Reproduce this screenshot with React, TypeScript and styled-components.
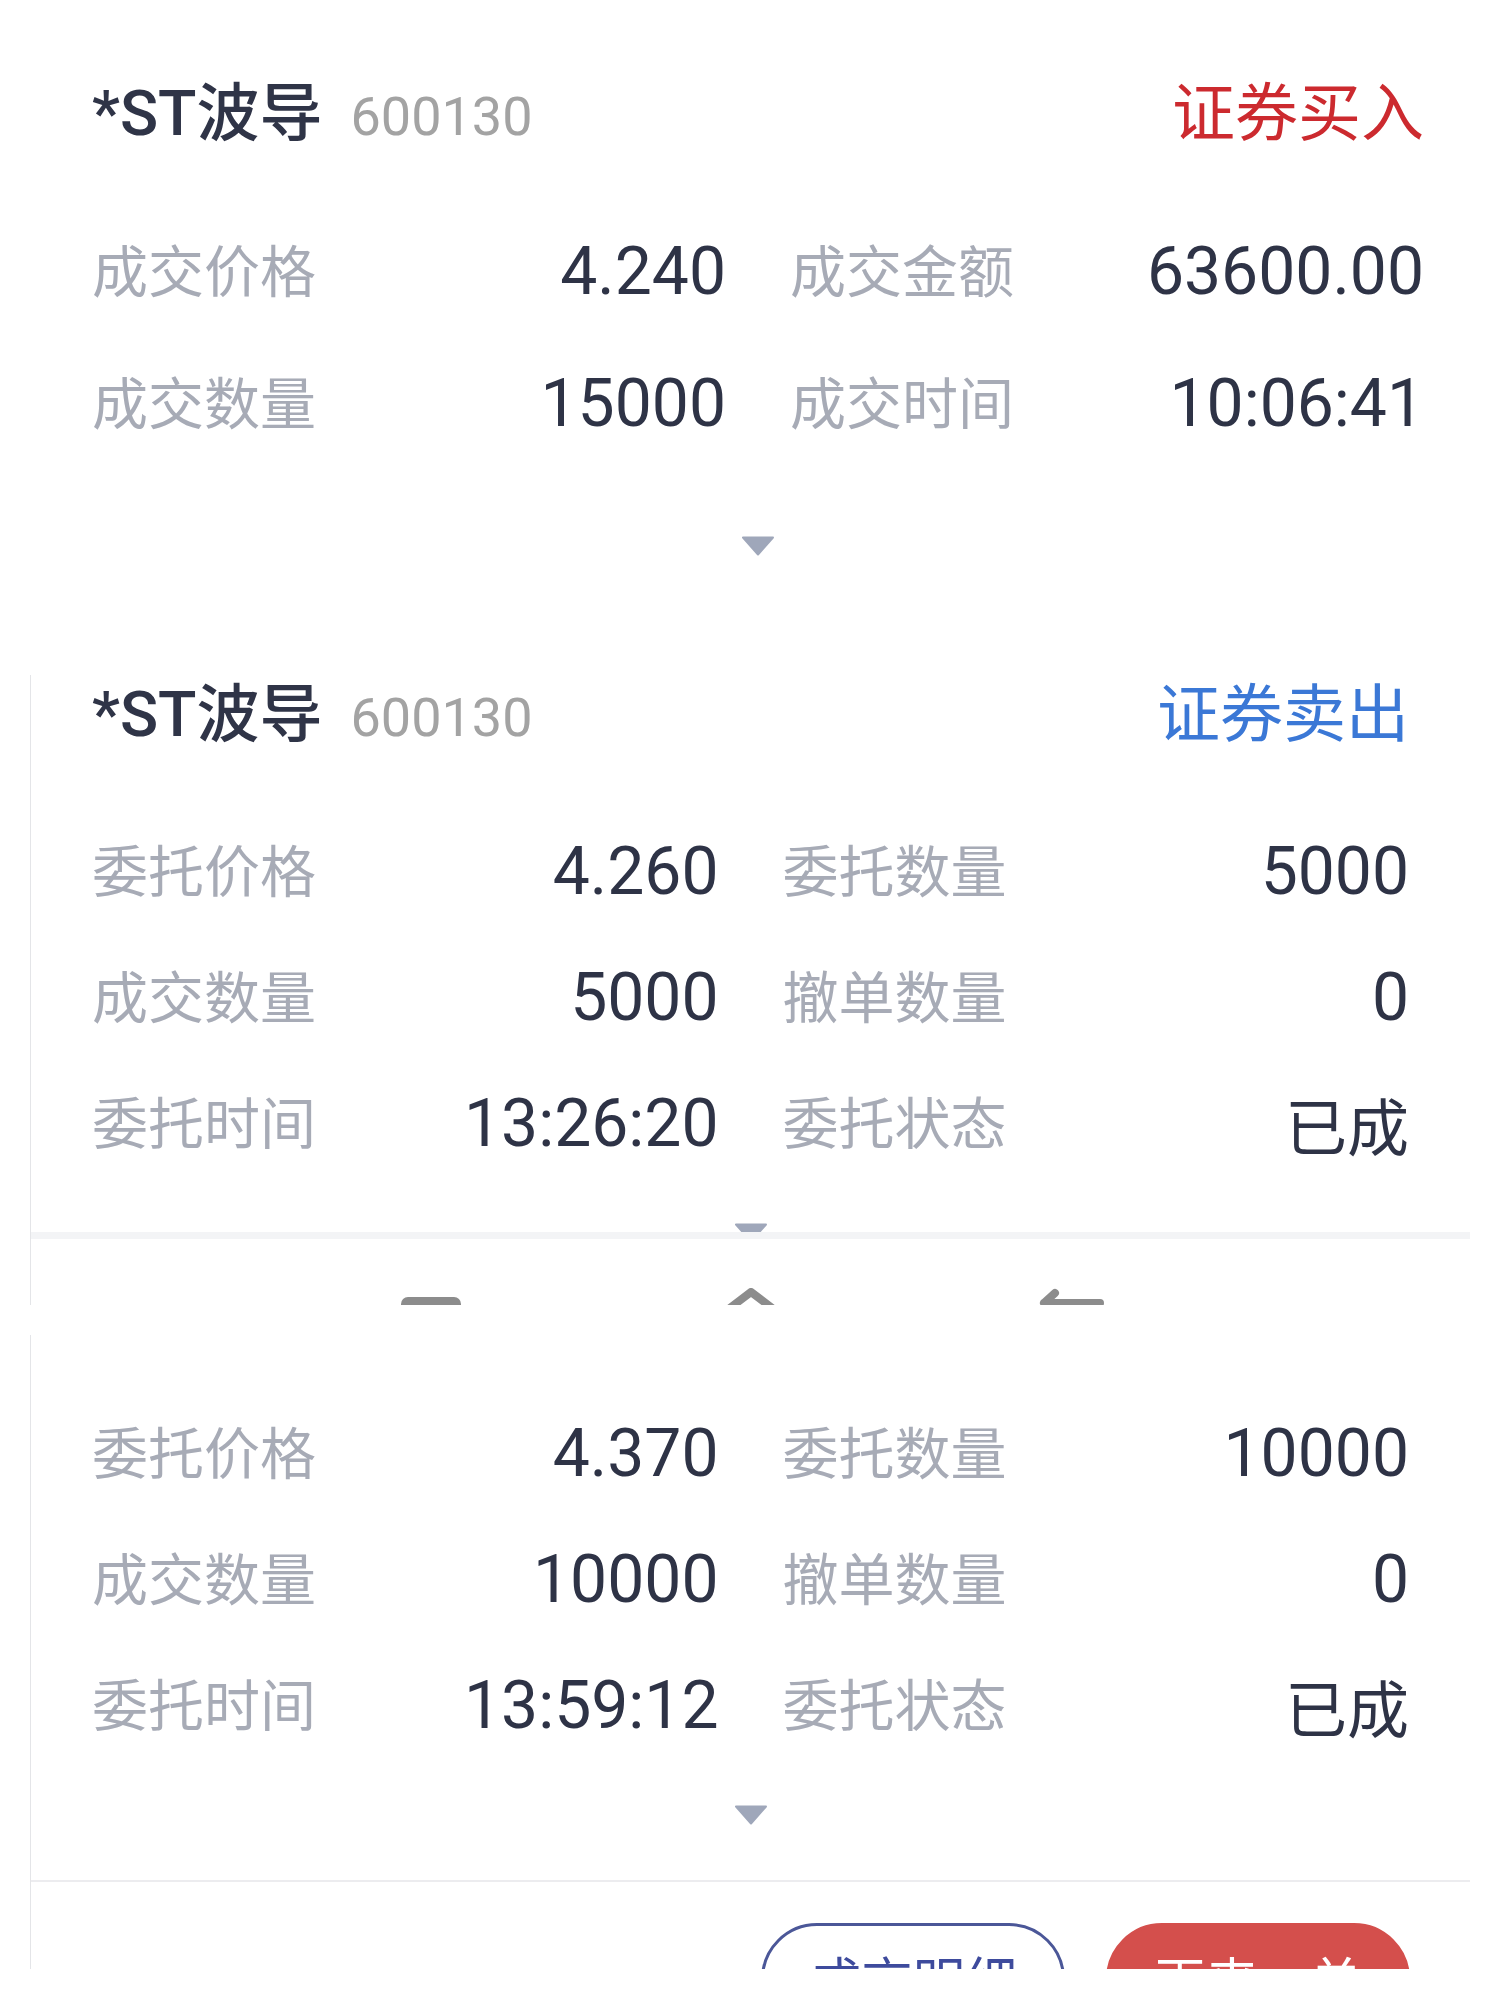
import React from "react";
import styled, { createGlobalStyle } from "styled-components";

const GlobalStyle = createGlobalStyle`
  html, body {
    margin: 0;
    padding: 0;
    background: #ffffff;
  }
  body {
    font-family: Roboto, "Noto Sans CJK SC", sans-serif;
  }
  * { box-sizing: border-box; }
`;

const Page = styled.div`
  width: 1500px;
  min-height: 2000px;
  background: #ffffff;
`;

const Card = styled.section<{ $framed?: boolean; $clip?: number; $gap?: number }>`
  margin: ${p => (p.$framed ? `0 30px ${p.$gap ?? 0}px 30px` : `0 0 ${p.$gap ?? 0}px 0`)};
  border-left: ${p => (p.$framed ? "1px solid #e4e5e8" : "none")};
  ${p => (p.$clip ? `height: ${p.$clip}px; overflow: hidden;` : "")}
`;

const Body = styled.div<{ $top: number; $right: number; $bottom?: number; $left: number }>`
  padding: ${p => `${p.$top}px ${p.$right}px ${p.$bottom ?? 0}px ${p.$left}px`};
`;

const Header = styled.header`
  display: flex;
  align-items: baseline;
  height: 66px;
  line-height: 66px;
`;

const StockName = styled.span`
  font-family: Roboto, "Noto Sans CJK SC", sans-serif;
  font-size: 63px;
  font-weight: 500;
  color: #2f3447;
`;

const StockCode = styled.span`
  font-family: Roboto, sans-serif;
  font-size: 54px;
  color: #a3a3a3;
  margin-left: 28px;
`;

const TradeType = styled.span<{ $color: string }>`
  margin-left: auto;
  font-family: "Noto Sans CJK SC", sans-serif;
  font-size: 63px;
  color: ${p => p.$color};
`;

const Grid = styled.div<{ $row: number; $top: number }>`
  display: grid;
  grid-template-columns: 1fr 1fr;
  column-gap: 64px;
  grid-auto-rows: ${p => p.$row}px;
  margin-top: ${p => p.$top}px;
`;

const Cell = styled.div`
  display: flex;
  justify-content: space-between;
  align-items: center;
`;

const Label = styled.span`
  font-family: "Noto Sans CJK SC", sans-serif;
  font-size: 56px;
  line-height: 1;
  padding-bottom: 4px;
  color: #a7abb6;
`;

const Value = styled.span<{ $cjk?: boolean }>`
  font-family: ${p => (p.$cjk ? `"Noto Sans CJK SC", sans-serif` : `Roboto, "Noto Sans CJK SC", sans-serif`)};
  font-size: ${p => (p.$cjk ? 62 : 66)}px;
  line-height: 1;
  padding-top: 4px;
  color: #2e3346;
`;

const Caret = styled.div<{ $top: number; $clip?: number }>`
  display: flex;
  justify-content: center;
  margin-top: ${p => p.$top}px;
  height: ${p => p.$clip ?? 20}px;
  overflow: hidden;
  svg { flex: none; }
`;

const Divider = styled.div<{ $h: number; $color: string }>`
  height: ${p => p.$h}px;
  background: ${p => p.$color};
`;

const NavStrip = styled.nav`
  height: 66px;
  overflow: hidden;
  display: flex;
  justify-content: center;
  gap: 200px;
  padding-top: 49px;
`;

const NavSlot = styled.div`
  width: 120px;
  display: flex;
  justify-content: center;
  svg { flex: none; }
`;

const Actions = styled.div`
  display: flex;
  justify-content: flex-end;
  gap: 41px;
  padding: 41px 60px 0 0;
`;

const ActionButton = styled.button<{ $primary?: boolean }>`
  width: 304px;
  height: 112px;
  padding: 0;
  border-radius: 56px;
  border: 3px solid ${p => (p.$primary ? "#d44f4c" : "#4b5798")};
  background: ${p => (p.$primary ? "#d44f4c" : "#ffffff")};
  color: ${p => (p.$primary ? "#ffffff" : "#3e4b9d")};
  font-family: "Noto Sans CJK SC", sans-serif;
  font-size: 52px;
  line-height: 1;
`;

type Pair = { label: string; value: string; cjk?: boolean };

const buyRows: Pair[] = [
  { label: "成交价格", value: "4.240" },
  { label: "成交金额", value: "63600.00" },
  { label: "成交数量", value: "15000" },
  { label: "成交时间", value: "10:06:41" },
];

const sellRows: Pair[] = [
  { label: "委托价格", value: "4.260" },
  { label: "委托数量", value: "5000" },
  { label: "成交数量", value: "5000" },
  { label: "撤单数量", value: "0" },
  { label: "委托时间", value: "13:26:20" },
  { label: "委托状态", value: "已成", cjk: true },
];

const lastRows: Pair[] = [
  { label: "委托价格", value: "4.370" },
  { label: "委托数量", value: "10000" },
  { label: "成交数量", value: "10000" },
  { label: "撤单数量", value: "0" },
  { label: "委托时间", value: "13:59:12" },
  { label: "委托状态", value: "已成", cjk: true },
];

function DownArrow() {
  return (
    <svg width="34" height="20" viewBox="0 0 34 20">
      <polygon points="2,1.5 32,1.5 17,18.5" fill="#9fa7ba" stroke="#9fa7ba" strokeWidth="2" strokeLinejoin="round" />
    </svg>
  );
}

function Rows({ items, row, top }: { items: Pair[]; row: number; top: number }) {
  return (
    <Grid $row={row} $top={top}>
      {items.map((it, i) => (
        <Cell key={i}>
          <Label>{it.label}</Label>
          <Value $cjk={it.cjk}>{it.value}</Value>
        </Cell>
      ))}
    </Grid>
  );
}

export default function App() {
  return (
    <Page>
      <GlobalStyle />

      <Card>
        <Body $top={75} $right={76} $bottom={119} $left={92}>
          <Header>
            <StockName>*ST波导</StockName>
            <StockCode>600130</StockCode>
            <TradeType $color="#cc2a2f">证券买入</TradeType>
          </Header>
          <Rows items={buyRows} row={132} top={63} />
          <Caret $top={68}>
            <DownArrow />
          </Caret>
        </Body>
      </Card>

      <Card $framed $gap={30}>
        <Body $top={1} $right={61} $left={61}>
          <Header>
            <StockName>*ST波导</StockName>
            <StockCode>600130</StockCode>
            <TradeType $color="#3b78d6">证券卖出</TradeType>
          </Header>
          <Rows items={sellRows} row={126} top={65} />
          <Caret $top={38} $clip={9}>
            <DownArrow />
          </Caret>
        </Body>
        <Divider $h={7} $color="#f3f4f6" />
        <NavStrip>
          <NavSlot>
            <svg width="60" height="24" viewBox="0 0 60 24">
              <rect x="0" y="9" width="60" height="14" rx="7" fill="#8c8c8c" />
            </svg>
          </NavSlot>
          <NavSlot>
            <svg width="56" height="30" viewBox="0 0 56 30">
              <polyline points="3,23 28,4 53,23" fill="none" stroke="#8c8c8c" strokeWidth="8" strokeLinejoin="round" strokeLinecap="round" />
            </svg>
          </NavSlot>
          <NavSlot>
            <svg width="70" height="30" viewBox="0 0 70 30">
              <path d="M8 15 L19 5 M8 15 H64" fill="none" stroke="#8c8c8c" strokeWidth="8" strokeLinejoin="round" strokeLinecap="round" />
            </svg>
          </NavSlot>
        </NavStrip>
      </Card>

      <Card $framed $clip={634}>
        <Body $top={54} $right={61} $bottom={55} $left={61}>
          <Rows items={lastRows} row={126} top={0} />
          <Caret $top={38}>
            <DownArrow />
          </Caret>
        </Body>
        <Divider $h={2} $color="#ececef" />
        <Actions>
          <ActionButton>成交明细</ActionButton>
          <ActionButton $primary>再来一单</ActionButton>
        </Actions>
      </Card>
    </Page>
  );
}
